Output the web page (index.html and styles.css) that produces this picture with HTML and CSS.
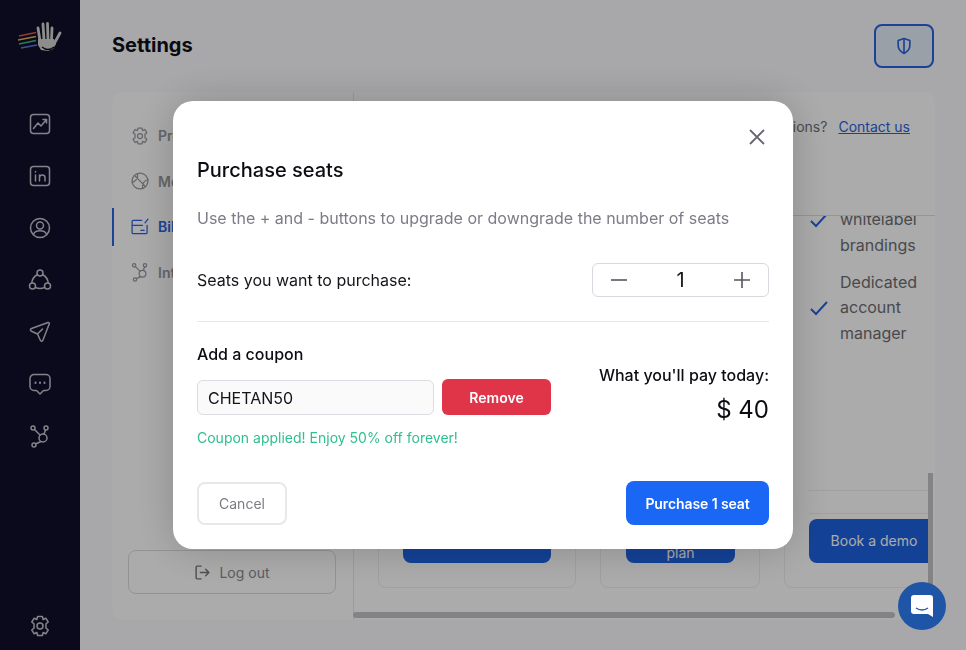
FILE: index.html
```html
<!DOCTYPE html>
<html lang="en">
<head>
    <meta charset="UTF-8">
    <meta name="viewport" content="width=device-width, initial-scale=1.0">
    <title>Settings</title>
    <link rel="stylesheet" href="styles.css">
</head>
<body>
    <div class="app">
        <!-- Dark icon rail -->
        <aside class="rail">
            <svg class="logo" viewBox="0 0 44 34" fill="none">
                <path d="M1 16 18 12.500" stroke="#e4564c" stroke-width="1.500"/>
                <path d="M0 20 18 16.500" stroke="#e8b64a" stroke-width="1.500"/>
                <path d="M1 24 18 20.500" stroke="#46b58c" stroke-width="1.500"/>
                <path d="M3 28 19 25" stroke="#5a7fd8" stroke-width="1.500"/>
                <path d="M20 8 22 21M25 4 26 20M29.500 3.500 30 20M34 8 33.500 20M36 24 42 13" stroke="#d2d2d0" stroke-width="2.800" stroke-linecap="round"/>
                <path d="M20 19h16l2 5-3 5-5 2-7-1-3-5z" fill="#d2d2d0"/>
                <path d="M24 27q6 5 12 0" stroke="#0b0a1e" stroke-width="1.300"/>
            </svg>
            <nav class="rail-icons">
                <svg class="rail-icon" viewBox="0 0 24 24"><rect x="2.500" y="2.500" width="19" height="19" rx="3"/><path d="M5.500 16.500 10 11l3 3 5.500-6.500M15 7.500h3.500V11"/></svg>
                <svg class="rail-icon" viewBox="0 0 24 24"><rect x="2.500" y="2.500" width="19" height="19" rx="3"/><path d="M7.500 11v6M7.500 7.500v.5M11.500 17v-6M11.500 13.500c0-3.500 5.500-3.500 5.500 0V17"/></svg>
                <svg class="rail-icon" viewBox="0 0 24 24"><circle cx="12" cy="12" r="9.500"/><circle cx="12" cy="9.500" r="3.500"/><path d="M5.500 18.500c1.500-5 11.500-5 13 0"/></svg>
                <svg class="rail-icon" viewBox="0 0 24 24"><circle cx="12" cy="5" r="3"/><circle cx="4.500" cy="18" r="3"/><circle cx="19.500" cy="18" r="3"/><path d="M9.500 6.500C6 8.500 4 11.500 3.800 15M14.500 6.500c3.500 2 5.500 5 5.700 8.500M7.500 19.500c3 1.300 6 1.300 9 0"/></svg>
                <svg class="rail-icon" viewBox="0 0 24 24"><path d="M20 2.500 3.500 8.500c-1.500.5-1.500 2.200 0 2.800l6 2.700 2.700 6c.6 1.500 2.300 1.500 2.800 0L21.300 3.800c.3-.8-.5-1.600-1.300-1.300zM9.500 14l5-5"/></svg>
                <svg class="rail-icon" viewBox="0 0 24 24"><path d="M6 2.500h12a4 4 0 0 1 4 4v8a4 4 0 0 1-4 4h-2.500L12 22l-3.500-3.500H6a4 4 0 0 1-4-4v-8a4 4 0 0 1 4-4z"/><path d="M7.500 10.500v.5M12 10.500v.5M16.500 10.500v.5" stroke-width="2"/></svg>
                <svg class="rail-icon" viewBox="0 0 24 24"><circle cx="5" cy="4" r="2"/><circle cx="18" cy="4" r="2"/><circle cx="6" cy="21" r="2"/><circle cx="15" cy="14" r="4"/><path d="M6.500 5.500 12 11M17.500 6l-1.500 4M13 17.500 7.500 20"/></svg>
            </nav>
            <svg class="rail-icon rail-gear" viewBox="0 0 24 24"><circle cx="12" cy="12" r="3"/><path d="M9.600 2.500h4.800l.7 3 2.700-1.300 2.400 3.800-2.300 2 .1 2-.1 2 2.300 2-2.400 3.800-2.700-1.300-.7 3H9.600l-.7-3-2.700 1.300-2.400-3.800 2.300-2-.1-2 .1-2-2.300-2 2.400-3.800 2.700 1.300z"/></svg>
        </aside>

        <main class="main">
            <header class="topbar">
                <h1 class="page-title">Settings</h1>
                <button class="shield-btn">
                    <svg class="shield-icon" viewBox="0 0 24 24"><path d="M12 3 5 5.500v6c0 4.500 3 7.500 7 9.500 4-2 7-5 7-9.500v-6z"/><path d="M12 3v18"/></svg>
                </button>
            </header>

            <section class="settings">
                <div class="side">
                    <ul class="side-nav">
                        <li class="side-item">
                            <svg class="side-icon" viewBox="0 0 24 24"><circle cx="12" cy="12" r="3"/><path d="M9.600 2.500h4.800l.7 3 2.700-1.300 2.400 3.800-2.300 2 .1 2-.1 2 2.300 2-2.400 3.800-2.700-1.300-.7 3H9.600l-.7-3-2.700 1.300-2.400-3.800 2.300-2-.1-2 .1-2-2.300-2 2.400-3.800 2.700 1.300z"/></svg>
                            Profile
                        </li>
                        <li class="side-item">
                            <svg class="side-icon" viewBox="0 0 24 24"><circle cx="12" cy="12" r="9.500"/><path d="M5.300 5.300 18.700 18.700M9 3c1 5-2 10-6.500 10.500M21.500 10.500C17 11 14 16 15 21"/></svg>
                            Members
                        </li>
                        <li class="side-item side-item-active">
                            <svg class="side-icon" viewBox="0 0 24 24"><path d="M14 4H4a1.500 1.500 0 0 0-1.500 1.500v13A1.500 1.500 0 0 0 4 20h15a1.500 1.500 0 0 0 1.500-1.500V10M2.500 10H15M13 16h4M18 7l3.500-4.500"/></svg>
                            Billing
                        </li>
                        <li class="side-item">
                            <svg class="side-icon" viewBox="0 0 24 24"><circle cx="5" cy="4" r="2"/><circle cx="18" cy="4" r="2"/><circle cx="6" cy="21" r="2"/><circle cx="15" cy="14" r="4"/><path d="M6.500 5.500 12 11M17.500 6l-1.500 4M13 17.500 7.500 20"/></svg>
                            Integrations
                        </li>
                    </ul>
                    <button class="logout-btn">
                        <svg class="logout-icon" viewBox="0 0 24 24"><path d="M10 3H4.500A1.500 1.500 0 0 0 3 4.500v15A1.500 1.500 0 0 0 4.500 21H10M9 12h12M16.500 7.500 21 12l-4.500 4.500"/></svg>
                        Log out
                    </button>
                </div>

                <div class="billing">
                    <div class="billing-head">
                        <span>Any questions?</span>
                        <a class="contact-link" href="#">Contact us</a>
                    </div>
                    <div class="plans">
                        <div class="plan plan-first">
                            <button class="plan-btn plan-btn-wide">Upgrade</button>
                        </div>
                        <div class="plan plan-second">
                            <button class="plan-btn plan-btn-narrow">Upgrade plan</button>
                        </div>
                        <div class="plan plan-third">
                            <ul class="features">
                                <li class="feature">
                                    <svg class="check" viewBox="0 0 20 20"><path d="M2 11l5 5L18 4"/></svg>
                                    <span>Custom whitelabel brandings</span>
                                </li>
                                <li class="feature">
                                    <svg class="check" viewBox="0 0 20 20"><path d="M2 11l5 5L18 4"/></svg>
                                    <span>Dedicated account manager</span>
                                </li>
                            </ul>
                            <div class="plan-rule plan-rule-top"></div>
                            <div class="plan-rule plan-rule-bottom"></div>
                            <button class="plan-btn plan-btn-demo">Book a demo</button>
                        </div>
                    </div>
                    <div class="scroll-x"></div>
                    <div class="scroll-y"></div>
                </div>
            </section>
        </main>
    </div>

    <!-- Purchase seats modal -->
    <div class="overlay">
        <div class="modal">
            <div class="modal-close">
                <svg class="close-icon" viewBox="0 0 16 16"><path d="M1 1l14 14M15 1 1 15"/></svg>
            </div>
            <h2 class="modal-title">Purchase seats</h2>
            <p class="modal-sub">Use the + and - buttons to upgrade or downgrade the number of seats</p>

            <div class="seats-row">
                <span class="seats-label">Seats you want to purchase:</span>
                <div class="stepper">
                    <svg class="step-icon" viewBox="0 0 16 16"><path d="M0 8h16"/></svg>
                    <span class="step-value">1</span>
                    <svg class="step-icon" viewBox="0 0 16 16"><path d="M0 8h16M8 0v16"/></svg>
                </div>
            </div>

            <div class="coupon-row">
                <div class="coupon">
                    <h3 class="coupon-title">Add a coupon</h3>
                    <div class="coupon-controls">
                        <input class="coupon-input" type="text" value="CHETAN50">
                        <button class="remove-btn">Remove</button>
                    </div>
                    <p class="coupon-note">Coupon applied! Enjoy 50% off forever!</p>
                </div>
                <div class="total">
                    <div class="total-label">What you'll pay today:</div>
                    <div class="total-value">$ 40</div>
                </div>
            </div>

            <div class="modal-actions">
                <button class="cancel-btn">Cancel</button>
                <button class="purchase-btn">Purchase 1 seat</button>
            </div>
        </div>
    </div>

    <button class="chat-bubble">
        <svg class="chat-icon" viewBox="0 0 24 24"><path d="M4 1h16a3 3 0 0 1 3 3v19l-5-3H4a3 3 0 0 1-3-3V4a3 3 0 0 1 3-3z" fill="#fff"/><path d="M6 14q6 4 12 0" fill="none" stroke="#1f55a6" stroke-width="1.500"/></svg>
    </button>
</body>
</html>
```

FILE: styles.css
```css
* {
    margin: 0;
    padding: 0;
    box-sizing: border-box;
}

body {
    font-family: Inter, "Liberation Sans", sans-serif;
    height: 650px;
    overflow: hidden;
    background: #fbfbff;
    color: #101018;
}

button {
    font-family: inherit;
    border: none;
}

ul {
    list-style: none;
}

.app {
    display: flex;
    height: 650px;
}

/* icon rail */
.rail {
    width: 80px;
    flex-shrink: 0;
    background: #11102c;
    display: flex;
    flex-direction: column;
    align-items: center;
    padding-top: 20px;
    padding-bottom: 12px;
}

.logo {
    width: 44px;
    height: 34px;
}

.rail-icons {
    display: flex;
    flex-direction: column;
    gap: 28px;
    margin-top: 58px;
}

.rail-icon {
    display: block;
    width: 24px;
    height: 24px;
    fill: none;
    stroke: #c4c4cc;
    stroke-width: 1.5;
    stroke-linecap: round;
    stroke-linejoin: round;
}

.rail-gear {
    margin-top: auto;
}

/* main area */
.main {
    flex: 1;
    min-width: 0;
    padding: 24px 32px 30px;
    display: flex;
    flex-direction: column;
}

.topbar {
    display: flex;
    justify-content: space-between;
    align-items: flex-start;
    height: 44px;
    margin-bottom: 24px;
}

.page-title {
    font-size: 20px;
    font-weight: 700;
    line-height: 42px;
}

.shield-btn {
    width: 60px;
    height: 44px;
    border: 2px solid #2a63e0;
    border-radius: 8px;
    background: #e6effb;
    display: flex;
    align-items: center;
    justify-content: center;
}

.shield-icon {
    width: 20px;
    height: 20px;
    fill: none;
    stroke: #2a63e0;
    stroke-width: 2;
    stroke-linejoin: round;
}

.settings {
    flex: 1;
    display: flex;
    margin-right: -1px;
    background: #fff;
    border-radius: 10px;
    min-height: 0;
}

.side {
    width: 242px;
    flex-shrink: 0;
    padding: 24px 16px 26px;
    display: flex;
    flex-direction: column;
    border-right: 1px solid #e8e8ec;
}

.side-nav {
    display: flex;
    flex-direction: column;
    gap: 7.5px;
    margin-left: -16px;
    padding-top: 0.5px;
}

.side-item {
    display: flex;
    align-items: center;
    gap: 8px;
    height: 38px;
    padding-left: 18px;
    font-size: 14px;
    font-weight: 600;
    color: #98989e;
}

.side-item-active {
    color: #2a63e0;
    border-left: 2px solid #2a63e0;
    padding-left: 16px;
}

.side-icon {
    width: 20px;
    height: 20px;
    fill: none;
    stroke: currentColor;
    stroke-width: 1.5;
    stroke-linecap: round;
    stroke-linejoin: round;
}

.logout-btn {
    margin-top: auto;
    width: 208px;
    height: 44px;
    border: 1px solid #dcdce2;
    border-radius: 8px;
    background: transparent;
    color: #8a8a90;
    font-size: 14px;
    display: flex;
    align-items: center;
    justify-content: center;
    gap: 8px;
}

.logout-icon {
    width: 17px;
    height: 17px;
    fill: none;
    stroke: #77777d;
    stroke-width: 2;
    stroke-linecap: round;
    stroke-linejoin: round;
}

.billing {
    flex: 1;
    min-width: 0;
    position: relative;
    display: flex;
    flex-direction: column;
}

.billing-head {
    height: 124px;
    flex-shrink: 0;
    border-bottom: 1px solid #dedee2;
    display: flex;
    justify-content: flex-end;
    gap: 11px;
    padding: 26px 25px 0 0;
    font-size: 14px;
    line-height: 18px;
    color: #707076;
}

.contact-link {
    color: #2a63e0;
    text-decoration: underline;
}

.plans {
    flex: 1;
    min-height: 0;
    margin-right: 7px;
    overflow: hidden;
    display: flex;
    align-items: flex-end;
    gap: 24px;
    padding: 0 0 32px 24px;
}

.plan {
    flex-shrink: 0;
    padding: 0 0 24px 24px;
    border: 1px solid #efeff2;
    border-top: none;
    border-radius: 0 0 8px 8px;
}

.plan-first {
    width: 198px;
}

.plan-second {
    width: 160px;
}

.plan-third {
    width: 190px;
}

.features {
    display: flex;
    flex-direction: column;
    gap: 11px;
    margin-bottom: 143.6px;
}

.feature {
    display: flex;
    align-items: center;
    gap: 11px;
    font-size: 16px;
    line-height: 25.6px;
    color: #6e6e74;
}

.feature span {
    width: 88px;
}

.check {
    width: 20px;
    height: 20px;
    flex-shrink: 0;
    fill: none;
    stroke: #2a63e0;
    stroke-width: 2;
}

.plan-rule {
    border-top: 1px solid #efeff2;
}

.plan-rule-top {
    margin-bottom: 22px;
}

.plan-rule-bottom {
    margin-bottom: 5px;
}

.plan-btn {
    height: 44px;
    border-radius: 8px;
    background: #1d62e0;
    color: #fff;
    font-size: 14px;
    line-height: 24px;
    display: flex;
    align-items: center;
    justify-content: center;
    text-align: center;
}

.plan-btn-wide {
    width: 148px;
}

.plan-btn-narrow {
    width: 109px;
    margin-left: 1px;
    padding: 0 24px;
}

.plan-btn-demo {
    width: 130px;
}

.scroll-x {
    position: absolute;
    left: -1px;
    bottom: 2px;
    width: 542px;
    height: 6px;
    border-radius: 3px;
    background: #c4c4c6;
}

.scroll-y {
    position: absolute;
    right: 2px;
    top: 381px;
    width: 5px;
    height: 112px;
    background: #c4c4c6;
}

/* modal */
.overlay {
    position: fixed;
    inset: 0;
    background: rgba(0, 0, 0, 0.33);
    display: flex;
    align-items: center;
    justify-content: center;
}

.modal {
    width: 620px;
    height: 448px;
    background: #fff;
    border-radius: 20px;
    padding: 24px;
    box-shadow: 0 0 40px rgba(0, 0, 0, 0.2);
}

.modal-close {
    display: flex;
    justify-content: flex-end;
    height: 24px;
    padding: 4px 4px 0 0;
}

.close-icon {
    width: 16px;
    height: 16px;
    fill: none;
    stroke: #666670;
    stroke-width: 1.8;
}

.modal-title {
    font-size: 20px;
    font-weight: 500;
    line-height: 26px;
    margin-top: 8px;
    color: #0c0c12;
}

.modal-sub {
    margin-top: 23px;
    font-size: 16px;
    line-height: 24px;
    color: #7c7c88;
}

.seats-row {
    display: flex;
    justify-content: space-between;
    align-items: center;
    margin-top: 33px;
    padding-bottom: 24px;
    border-bottom: 1px solid #e8e8ec;
}

.seats-label {
    font-size: 16px;
    color: #14141a;
}

.stepper {
    width: 177px;
    height: 34px;
    border: 1px solid #d8d8de;
    border-radius: 6px;
    display: flex;
    align-items: center;
    justify-content: space-between;
    padding: 0 18px;
}

.step-icon {
    width: 16px;
    height: 16px;
    fill: none;
    stroke: #55555f;
    stroke-width: 1.6;
}

.step-value {
    font-size: 20px;
    color: #14141a;
}

.coupon-row {
    display: flex;
    justify-content: space-between;
    margin-top: 22px;
}

.coupon-title {
    font-size: 16px;
    font-weight: 500;
    line-height: 20px;
    color: #0c0c12;
}

.coupon-controls {
    display: flex;
    align-items: flex-end;
    gap: 8px;
    margin-top: 15px;
}

.coupon-input {
    width: 237px;
    height: 35px;
    padding: 0 10px;
    border: 1px solid #dcdce2;
    border-radius: 6px;
    background: #fafafa;
    font-family: inherit;
    font-size: 16px;
    color: #14141a;
}

.remove-btn {
    width: 109px;
    height: 36px;
    border-radius: 6px;
    background: #e03448;
    color: #fff;
    font-size: 14px;
    font-weight: 600;
}

.coupon-note {
    margin-top: 14px;
    font-size: 14px;
    line-height: 18px;
    color: #2fc08f;
}

.total {
    text-align: right;
    padding-top: 21px;
}

.total-label {
    font-size: 16px;
    font-weight: 500;
    line-height: 20px;
    color: #0c0c12;
}

.total-value {
    margin-top: 10px;
    font-size: 24px;
    line-height: 30px;
    color: #0c0c12;
}

.modal-actions {
    display: flex;
    justify-content: space-between;
    align-items: flex-start;
    margin-top: 34px;
}

.cancel-btn {
    width: 90px;
    height: 43px;
    margin-top: 1px;
    border: 2px solid #e8e8ec;
    border-radius: 8px;
    background: #fff;
    color: #7c7c84;
    font-size: 14px;
}

.purchase-btn {
    width: 143px;
    height: 44px;
    border-radius: 8px;
    background: #1a66f5;
    color: #fff;
    font-size: 14px;
    font-weight: 600;
    letter-spacing: -0.1px;
}

/* chat launcher */
.chat-bubble {
    position: fixed;
    right: 20px;
    bottom: 20px;
    width: 48px;
    height: 48px;
    border-radius: 50%;
    background: #1f55a6;
    display: flex;
    align-items: center;
    justify-content: center;
}

.chat-icon {
    width: 24px;
    height: 24px;
}
```
